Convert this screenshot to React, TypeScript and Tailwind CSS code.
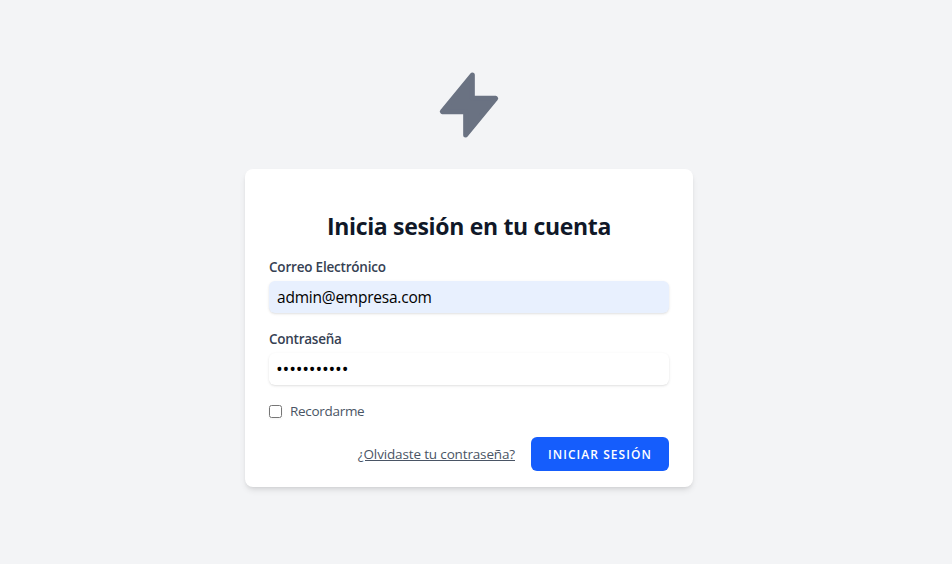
export default function App() {
  return (
    <div className="flex h-[564px] flex-col items-center overflow-hidden bg-gray-100 pr-[14px] pt-[65px] font-['Open_Sans','Noto_Sans',sans-serif] text-gray-900">
      <svg
        className="size-20 shrink-0 text-gray-500"
        viewBox="0 0 24 24"
        fill="currentColor"
        stroke="currentColor"
        strokeWidth="1.5"
        strokeLinecap="round"
        strokeLinejoin="round"
      >
        <path d="M13 10V3L4 14h7v7l9-11h-7z" />
      </svg>
      <main className="mt-6 w-[448px] rounded-lg bg-white px-6 pb-4 pt-[41px] shadow-md">
        <h2 className="text-center text-[23px] font-bold leading-8 tracking-[-0.32px]">
          <span className="whitespace-nowrap">Inicia sesión en tu cuenta</span>
        </h2>
        <form className="mt-[15px]" onSubmit={(e) => e.preventDefault()}>
          <label htmlFor="email" className="block text-[13.5px] font-semibold leading-5 tracking-[-0.2px] text-gray-700">
            <span>Correo Electrónico</span>
          </label>
          <input
            id="email"
            type="email"
            defaultValue="admin@empresa.com"
            className="mt-1 block h-8 w-full rounded-md bg-[#e8f0fe] px-2 text-[15.5px] tracking-[-0.23px] text-black shadow-sm outline-none"
          />
          <label htmlFor="password" className="mt-4 block text-[13.5px] font-semibold leading-5 tracking-[-0.25px] text-gray-700">
            <span>Contraseña</span>
          </label>
          <input
            id="password"
            type="password"
            defaultValue="contrasena1"
            className="mt-1 block h-8 w-full rounded-md bg-white px-[7px] text-[18px] tracking-[-0.2px] text-black shadow-sm outline-none"
          />
          <label className="mt-4 flex h-5 items-center">
            <input type="checkbox" className="size-[13px] rounded shadow-xs" />
            <span className="ms-2 text-[13.5px] leading-5 tracking-[-0.3px] text-gray-600">Recordarme</span>
          </label>
          <div className="mt-4 flex items-center justify-end">
            <a href="#" className="whitespace-nowrap text-[13.5px] leading-5 tracking-[-0.15px] text-gray-600 underline">
              ¿Olvidaste tu contraseña?
            </a>
            <button className="ms-4 h-[34px] w-[138px] whitespace-nowrap rounded-md bg-[#155dfc] pt-px text-xs font-semibold uppercase tracking-[1.05px] text-white">
              Iniciar sesión
            </button>
          </div>
        </form>
      </main>
    </div>
  );
}
